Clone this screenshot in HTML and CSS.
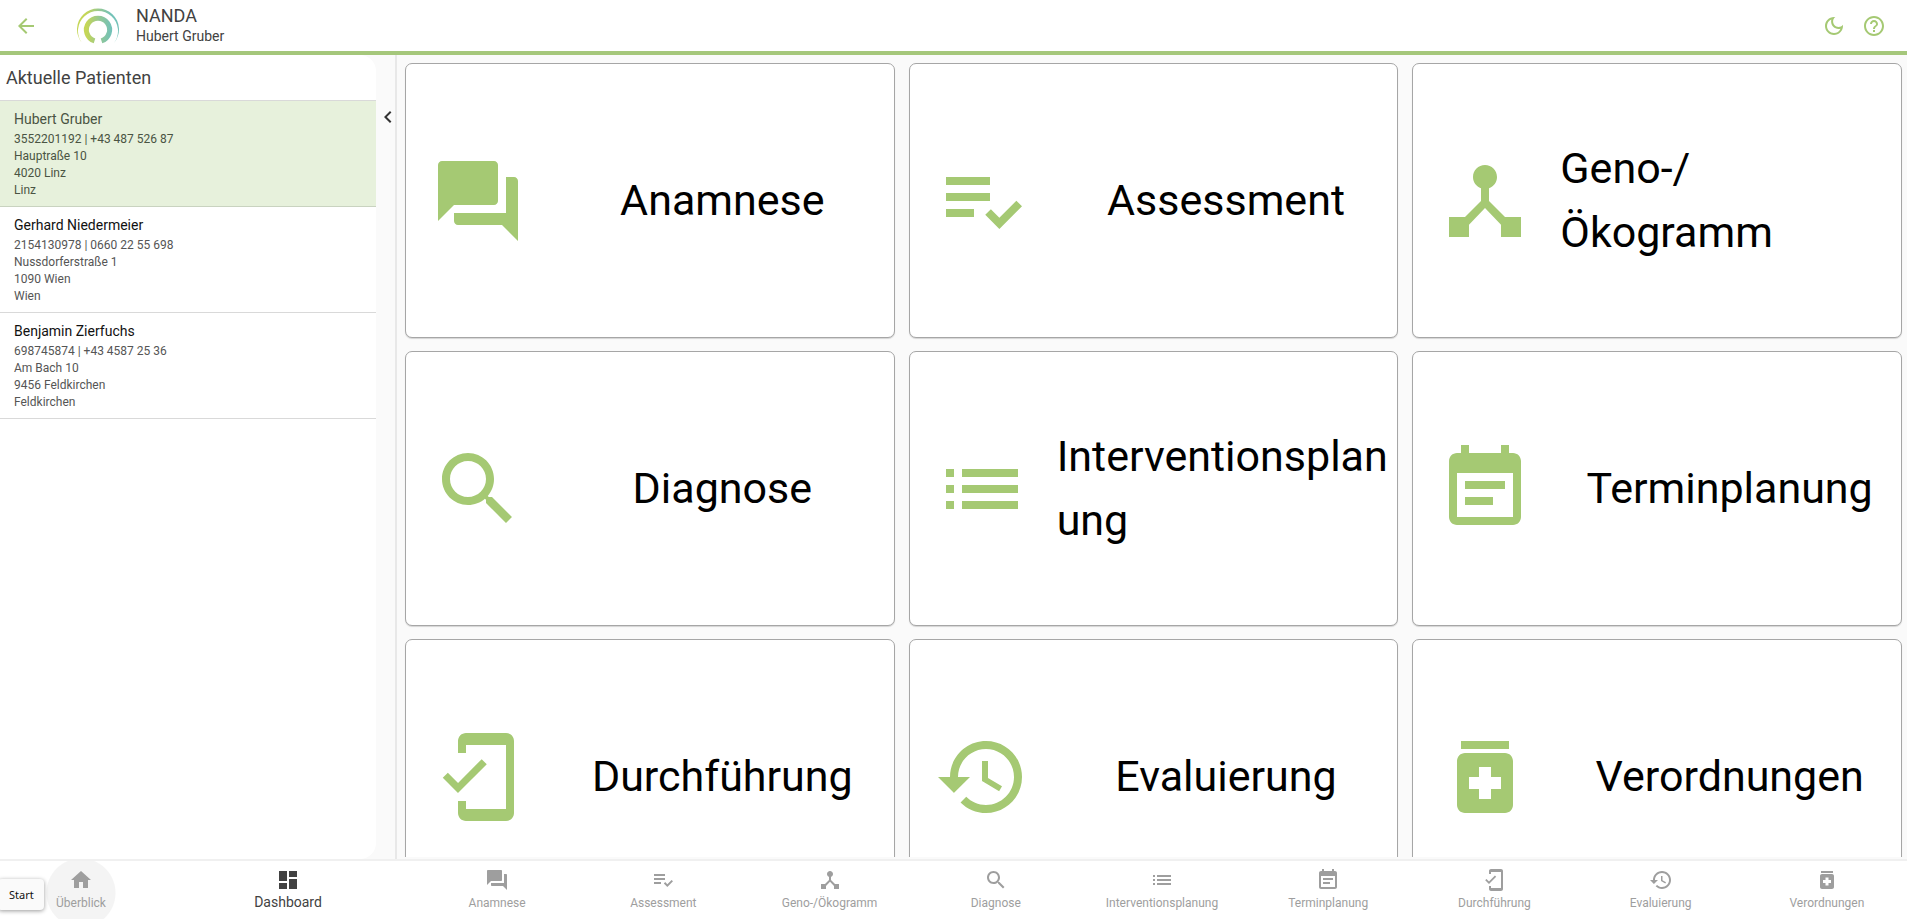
FILE: index.html
```html
<!DOCTYPE html>
<html lang="de">

<head>
    <meta charset="UTF-8">
    <meta name="viewport" content="width=device-width, initial-scale=1.0">
    <title>NANDA</title>
    <link rel="stylesheet" href="styles.css">
</head>

<body>
    <!-- Icon sprite -->
    <svg class="sprite" aria-hidden="true">
        <symbol id="i-back" viewBox="0 0 24 24"><path d="M20 11H7.83l5.59-5.59L12 4l-8 8 8 8 1.41-1.41L7.83 13H20v-2z"/></symbol>
        <symbol id="i-moon" viewBox="0 0 24 24"><path d="M9.37 5.51C9.19 6.15 9.1 6.82 9.1 7.5c0 4.08 3.32 7.4 7.4 7.4.68 0 1.35-.09 1.99-.27C17.45 17.19 14.93 19 12 19c-3.86 0-7-3.14-7-7 0-2.93 1.81-5.45 4.37-6.49zM12 3c-4.97 0-9 4.03-9 9s4.03 9 9 9 9-4.03 9-9c0-.46-.04-.92-.1-1.36-.98 1.37-2.58 2.26-4.4 2.26-2.98 0-5.4-2.42-5.4-5.4 0-1.81.89-3.42 2.26-4.4-.44-.06-.9-.1-1.36-.1z"/></symbol>
        <symbol id="i-help" viewBox="0 0 24 24"><path d="M11 18h2v-2h-2v2zm1-16C6.48 2 2 6.48 2 12s4.48 10 10 10 10-4.48 10-10S17.52 2 12 2zm0 18c-4.41 0-8-3.59-8-8s3.59-8 8-8 8 3.59 8 8-3.59 8-8 8zm0-14c-2.21 0-4 1.79-4 4h2c0-1.1.9-2 2-2s2 .9 2 2c0 2-3 1.75-3 5h2c0-2.25 3-2.5 3-5 0-2.21-1.79-4-4-4z"/></symbol>
        <symbol id="i-chevron" viewBox="0 0 24 24"><path d="M15.41 7.41L14 6l-6 6 6 6 1.41-1.41L10.83 12z"/></symbol>
        <symbol id="i-home" viewBox="0 0 24 24"><path d="M10 20v-6h4v6h5v-8h3L12 3 2 12h3v8z"/></symbol>
        <symbol id="i-dashboard" viewBox="0 0 24 24"><path d="M3 13h8V3H3v10zm0 8h8v-6H3v6zm10 0h8V11h-8v10zm0-18v6h8V3h-8z"/></symbol>
        <symbol id="i-anamnese" viewBox="0 0 24 24"><path d="M21 6h-2v9H6v2c0 .55.45 1 1 1h11l4 4V7c0-.55-.45-1-1-1zm-4 6V3c0-.55-.45-1-1-1H3c-.55 0-1 .45-1 1v14l4-4h10c.55 0 1-.45 1-1z"/></symbol>
        <symbol id="i-assessment" viewBox="0 0 24 24"><path d="M3 10h11v2H3zM3 6h11v2H3zM3 14h7v2H3zM20.59 11.93l-4.25 4.24-2.12-2.12-1.41 1.41L16.34 19 22 13.34z"/></symbol>
        <symbol id="i-geno" viewBox="0 0 24 24"><path d="M17 16l-4-4V8.82C14.16 8.4 15 7.3 15 6c0-1.66-1.34-3-3-3S9 4.34 9 6c0 1.3.84 2.4 2 2.82V12l-4 4H3v5h5v-3.05l4-4.2 4 4.2V21h5v-5h-4z"/></symbol>
        <symbol id="i-diagnose" viewBox="0 0 24 24"><path d="M15.5 14h-.79l-.28-.27C15.41 12.59 16 11.11 16 9.5 16 5.91 13.09 3 9.5 3S3 5.91 3 9.5 5.91 16 9.5 16c1.61 0 3.09-.59 4.23-1.57l.27.28v.79l5 4.99L20.49 19l-4.99-5zm-6 0C7.01 14 5 11.99 5 9.5S7.01 5 9.5 5 14 7.01 14 9.5 11.99 14 9.5 14z"/></symbol>
        <symbol id="i-intervention" viewBox="0 0 24 24"><path d="M3 13h2v-2H3v2zm0 4h2v-2H3v2zm0-8h2V7H3v2zm4 4h14v-2H7v2zm0 4h14v-2H7v2zM7 7v2h14V7H7z"/></symbol>
        <symbol id="i-termin" viewBox="0 0 24 24"><path d="M17 10H7v2h10v-2zm2-7h-1V1h-2v2H8V1H6v2H5c-1.11 0-1.99.9-1.99 2L3 19c0 1.1.89 2 2 2h14c1.1 0 2-.9 2-2V5c0-1.1-.9-2-2-2zm0 16H5V8h14v11zm-5-5H7v2h7v-2z"/></symbol>
        <symbol id="i-durchfuehrung" viewBox="0 0 24 24"><path d="M19 1H9c-1.1 0-2 .9-2 2v3h2V4h10v16H9v-2H7v3c0 1.1.9 2 2 2h10c1.1 0 2-.9 2-2V3c0-1.1-.9-2-2-2zM7.01 13.47l-2.55-2.55-1.27 1.27L7 16l7.19-7.19-1.27-1.27-5.91 5.93z"/></symbol>
        <symbol id="i-evaluierung" viewBox="0 0 24 24"><path d="M13 3c-4.97 0-9 4.03-9 9H1l3.89 3.89.07.14L9 12H6c0-3.87 3.13-7 7-7s7 3.13 7 7-3.13 7-7 7c-1.93 0-3.68-.79-4.94-2.06l-1.42 1.42C8.27 19.99 10.51 21 13 21c4.97 0 9-4.03 9-9s-4.03-9-9-9zm-1 5v5l4.28 2.54.72-1.21-3.5-2.08V8H12z"/></symbol>
        <symbol id="i-verordnung" viewBox="0 0 24 24"><path d="M6 3h12v2H6zM17 6H7c-1.1 0-2 .9-2 2v11c0 1.1.9 2 2 2h10c1.1 0 2-.9 2-2V8c0-1.1-.9-2-2-2zm-1 9h-2.5v2.5h-3V15H8v-3h2.5V9.5h3V12H16v3z"/></symbol>
    </svg>

    <header class="topbar">
        <button class="icon-button" aria-label="Zurück"><svg class="icon"><use href="#i-back"/></svg></button>
        <svg class="logo" viewBox="0 0 42 36" aria-hidden="true">
            <defs>
                <linearGradient id="ring" gradientUnits="userSpaceOnUse" x1="2" y1="0" x2="40" y2="0">
                    <stop offset="0.2" stop-color="#c5d657"/>
                    <stop offset="0.55" stop-color="#93c795"/>
                    <stop offset="0.85" stop-color="#73c2b8"/>
                </linearGradient>
            </defs>
            <path fill="url(#ring)" d="M5 35A21 21 0 1 1 37 35A20 20 0 1 0 5 35z"/>
            <path fill="none" stroke="url(#ring)" stroke-width="5" d="M17.5 32.8A11.6 11.6 0 1 1 24.5 32.8"/>
        </svg>
        <div class="titles">
            <h1 class="app-name">NANDA</h1>
            <p class="app-patient">Hubert Gruber</p>
        </div>
        <div class="actions">
            <button class="icon-button" aria-label="Dunkles Design"><svg class="icon"><use href="#i-moon"/></svg></button>
            <button class="icon-button" aria-label="Hilfe"><svg class="icon"><use href="#i-help"/></svg></button>
        </div>
    </header>

    <div class="content">
        <aside class="drawer">
            <div class="patients">
                <h2 class="patients-title">Aktuelle Patienten</h2>
                <a class="patient selected" href="#">
                    <span class="patient-name">Hubert Gruber</span>
                    <span>3552201192 | +43 487 526 87</span>
                    <span>Hauptraße 10</span>
                    <span>4020 Linz</span>
                    <span>Linz</span>
                </a>
                <a class="patient" href="#">
                    <span class="patient-name">Gerhard Niedermeier</span>
                    <span>2154130978 | 0660 22 55 698</span>
                    <span>Nussdorferstraße 1</span>
                    <span>1090 Wien</span>
                    <span>Wien</span>
                </a>
                <a class="patient" href="#">
                    <span class="patient-name">Benjamin Zierfuchs</span>
                    <span>698745874 | +43 4587 25 36</span>
                    <span>Am Bach 10</span>
                    <span>9456 Feldkirchen</span>
                    <span>Feldkirchen</span>
                </a>
            </div>
            <button class="collapse" aria-label="Liste einklappen"><svg class="icon"><use href="#i-chevron"/></svg></button>
        </aside>

        <main class="tiles">
            <a class="tile" href="#"><svg class="tile-icon"><use href="#i-anamnese"/></svg><span class="tile-label"><span>Anamnese</span></span></a>
            <a class="tile" href="#"><svg class="tile-icon"><use href="#i-assessment"/></svg><span class="tile-label"><span>Assessment</span></span></a>
            <a class="tile" href="#"><svg class="tile-icon"><use href="#i-geno"/></svg><span class="tile-label"><span>Geno-/<wbr>Ökogramm</span></span></a>
            <a class="tile" href="#"><svg class="tile-icon"><use href="#i-diagnose"/></svg><span class="tile-label"><span>Diagnose</span></span></a>
            <a class="tile" href="#"><svg class="tile-icon"><use href="#i-intervention"/></svg><span class="tile-label"><span>Interventionsplanung</span></span></a>
            <a class="tile" href="#"><svg class="tile-icon"><use href="#i-termin"/></svg><span class="tile-label"><span>Terminplanung</span></span></a>
            <a class="tile" href="#"><svg class="tile-icon"><use href="#i-durchfuehrung"/></svg><span class="tile-label"><span>Durchführung</span></span></a>
            <a class="tile" href="#"><svg class="tile-icon"><use href="#i-evaluierung"/></svg><span class="tile-label"><span>Evaluierung</span></span></a>
            <a class="tile" href="#"><svg class="tile-icon"><use href="#i-verordnung"/></svg><span class="tile-label"><span>Verordnungen</span></span></a>
        </main>
    </div>

    <nav class="bottom-nav">
        <a class="nav-item hovered" href="#"><svg class="icon"><use href="#i-home"/></svg><span>Überblick</span></a>
        <a class="nav-item active" href="#"><svg class="icon"><use href="#i-dashboard"/></svg><span>Dashboard</span></a>
        <a class="nav-item" href="#"><svg class="icon"><use href="#i-anamnese"/></svg><span>Anamnese</span></a>
        <a class="nav-item" href="#"><svg class="icon"><use href="#i-assessment"/></svg><span>Assessment</span></a>
        <a class="nav-item" href="#"><svg class="icon"><use href="#i-geno"/></svg><span>Geno-/Ökogramm</span></a>
        <a class="nav-item" href="#"><svg class="icon"><use href="#i-diagnose"/></svg><span>Diagnose</span></a>
        <a class="nav-item" href="#"><svg class="icon"><use href="#i-intervention"/></svg><span>Interventionsplanung</span></a>
        <a class="nav-item" href="#"><svg class="icon"><use href="#i-termin"/></svg><span>Terminplanung</span></a>
        <a class="nav-item" href="#"><svg class="icon"><use href="#i-durchfuehrung"/></svg><span>Durchführung</span></a>
        <a class="nav-item" href="#"><svg class="icon"><use href="#i-evaluierung"/></svg><span>Evaluierung</span></a>
        <a class="nav-item" href="#"><svg class="icon"><use href="#i-verordnung"/></svg><span>Verordnungen</span></a>
        <div class="tooltip" role="tooltip">Start</div>
    </nav>
</body>

</html>
```

FILE: styles.css
```css
* {
    box-sizing: border-box;
}

body {
    margin: 0;
    height: 100vh;
    display: flex;
    flex-direction: column;
    overflow: hidden;
    background-color: #fafafa;
    color: #424242;
    font-family: Roboto, "Liberation Sans", sans-serif;
}

h1,
h2,
p {
    margin: 0;
    font-weight: 400;
}

a {
    color: inherit;
    text-decoration: none;
}

button {
    padding: 0;
    border: none;
    background: none;
    cursor: pointer;
}

svg {
    display: block;
    flex: none;
    fill: currentColor;
}

.sprite {
    position: absolute;
    width: 0;
    height: 0;
}

.icon {
    width: 24px;
    height: 24px;
}

/* Top bar */
.topbar {
    flex: none;
    display: flex;
    align-items: center;
    height: 55px;
    padding: 0 21px 0 14px;
    background-color: #fff;
    border-bottom: 4px solid #a5c77b;
}

.icon-button {
    color: #a5c973;
}

.logo {
    width: 42px;
    height: 36px;
    margin-left: 39px;
}

.titles {
    margin-left: 17px;
}

.app-name {
    font-size: 18px;
    line-height: 20px;
}

.app-patient {
    font-size: 14px;
    line-height: 20px;
}

.actions {
    display: flex;
    gap: 16px;
    margin-left: auto;
}

/* Patient list */
.content {
    flex: 1;
    min-height: 0;
    display: flex;
}

.drawer {
    flex: none;
    width: 397px;
    display: flex;
    align-items: flex-start;
    border-right: 2px solid #e8e8e8;
}

.patients {
    flex: 1;
    height: 100%;
    background-color: #fff;
    border-radius: 0 16px 16px 0;
}

.patients-title {
    padding: 0 6px;
    font-size: 18px;
    line-height: 45px;
    border-bottom: 1px solid #d9d9d9;
}

.patient {
    display: flex;
    flex-direction: column;
    padding: 8px 14px 7px;
    border-bottom: 1px solid #d9d9d9;
    color: #555;
    font-size: 12px;
    line-height: 17px;
}

.patient-name {
    margin-bottom: 2px;
    color: #111;
    font-size: 14px;
    line-height: 20px;
}

.patient.selected,
.patient.selected .patient-name {
    background-color: #e7f1dc;
    color: #4a5443;
}

.patient.selected {
    border-bottom-color: #c9d3c0;
}

.collapse {
    width: 19px;
    padding-top: 50px;
    color: #333;
}

/* Dashboard tiles */
.tiles {
    flex: 1;
    display: grid;
    grid-template-columns: repeat(3, minmax(0, 1fr));
    grid-auto-rows: 275px;
    gap: 13px 14px;
    padding: 8px 5px 0 8px;
    margin-bottom: 2px;
    overflow: hidden;
}

.tile {
    display: flex;
    align-items: center;
    gap: 25px;
    padding-left: 24px;
    background-color: #fff;
    border: 1px solid #a6a6a6;
    border-radius: 7px;
    box-shadow: 0 1px 1px rgba(0, 0, 0, 0.15);
}

.tile-icon {
    width: 96px;
    height: 96px;
    color: #a5c973;
}

.tile-label {
    flex: 1;
    min-width: 0;
    display: flex;
    justify-content: center;
    padding: 0 2px 2px;
    color: #000;
    font-size: 43px;
    line-height: 64px;
    overflow-wrap: anywhere;
}

/* Bottom navigation */
.bottom-nav {
    position: relative;
    flex: none;
    display: grid;
    grid-template-columns: 162px 252px repeat(9, minmax(0, 1fr));
    margin-right: -3px;
    background-color: #fff;
    border-top: 2px solid #f0f0f0;
    overflow: hidden;
}

.nav-item {
    display: flex;
    flex-direction: column;
    align-items: center;
    padding: 7px 0 4px;
    color: #9e9e9e;
    font-size: 12px;
    line-height: 23px;
}

.nav-item.active {
    color: #424242;
    font-size: 14px;
    line-height: 20px;
}

.nav-item.hovered {
    background: radial-gradient(circle at 50% 55%, #f4f4f4 34px, transparent 35px);
}

.tooltip {
    position: absolute;
    left: -2px;
    bottom: 9px;
    padding: 0 10px 0 11px;
    background-color: #fafafa;
    border-radius: 4px;
    box-shadow: 0 1px 4px rgba(0, 0, 0, 0.4);
    color: #111;
    font-family: "Noto Sans", sans-serif;
    font-size: 11px;
    line-height: 31px;
}
```
